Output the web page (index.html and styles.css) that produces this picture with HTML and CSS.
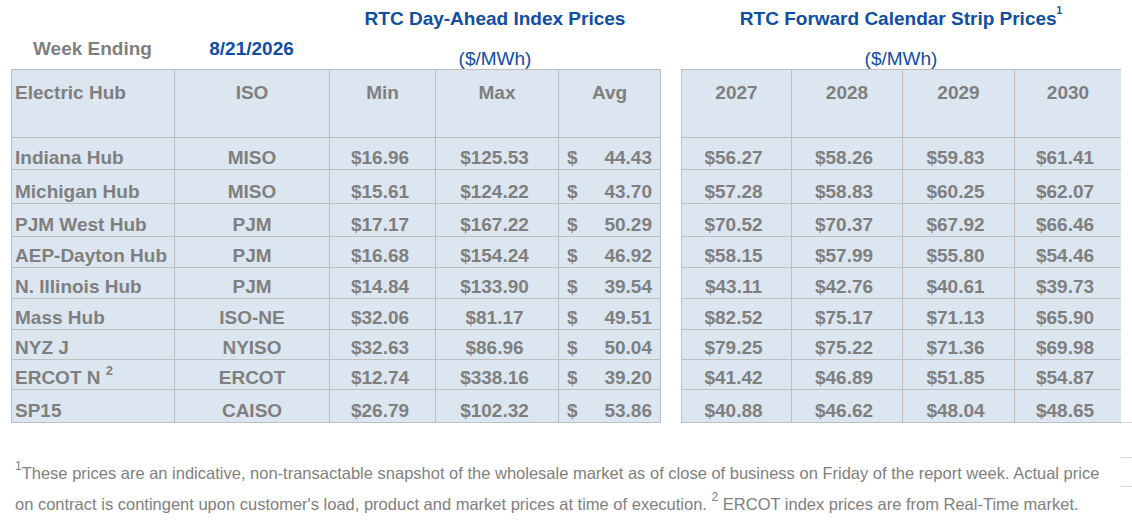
FILE: index.html
```html
<!DOCTYPE html>
<html lang="en">
<head>
<meta charset="utf-8">
<title>RTC Prices</title>
<link rel="stylesheet" href="styles.css">
</head>
<body>
<div class="page">
  <div class="main">
    <div class="tables">
      <section class="block">
        <div class="cap cap-left">
          <h2 class="title">RTC Day-Ahead Index Prices</h2>
          <div class="week">Week Ending</div>
          <div class="date">8/21/2026</div>
          <div class="unit">($/MWh)</div>
        </div>
        <div class="grid grid-left">
          <div class="row">
            <div class="c h hub">Electric Hub</div>
            <div class="c h">ISO</div>
            <div class="c h">Min</div>
            <div class="c h">Max</div>
            <div class="c h">Avg</div>
          </div>
          <div class="row">
            <div class="c hub">Indiana Hub</div><div class="c">MISO</div><div class="c money">$16.96</div><div class="c money">$125.53</div><div class="c acct"><span>$</span><span>44.43</span></div>
          </div>
          <div class="row">
            <div class="c hub">Michigan Hub</div><div class="c">MISO</div><div class="c money">$15.61</div><div class="c money">$124.22</div><div class="c acct"><span>$</span><span>43.70</span></div>
          </div>
          <div class="row">
            <div class="c hub">PJM West Hub</div><div class="c">PJM</div><div class="c money">$17.17</div><div class="c money">$167.22</div><div class="c acct"><span>$</span><span>50.29</span></div>
          </div>
          <div class="row">
            <div class="c hub">AEP-Dayton Hub</div><div class="c">PJM</div><div class="c money">$16.68</div><div class="c money">$154.24</div><div class="c acct"><span>$</span><span>46.92</span></div>
          </div>
          <div class="row">
            <div class="c hub">N. Illinois Hub</div><div class="c">PJM</div><div class="c money">$14.84</div><div class="c money">$133.90</div><div class="c acct"><span>$</span><span>39.54</span></div>
          </div>
          <div class="row">
            <div class="c hub">Mass Hub</div><div class="c">ISO-NE</div><div class="c money">$32.06</div><div class="c money">$81.17</div><div class="c acct"><span>$</span><span>49.51</span></div>
          </div>
          <div class="row">
            <div class="c hub">NYZ J</div><div class="c">NYISO</div><div class="c money">$32.63</div><div class="c money">$86.96</div><div class="c acct"><span>$</span><span>50.04</span></div>
          </div>
          <div class="row">
            <div class="c hub"><span>ERCOT N <sup class="cell-sup">2</sup></span></div><div class="c">ERCOT</div><div class="c money">$12.74</div><div class="c money">$338.16</div><div class="c acct"><span>$</span><span>39.20</span></div>
          </div>
          <div class="row">
            <div class="c hub">SP15</div><div class="c">CAISO</div><div class="c money">$26.79</div><div class="c money">$102.32</div><div class="c acct"><span>$</span><span>53.86</span></div>
          </div>
        </div>
      </section>

      <section class="block">
        <div class="cap cap-right">
          <h2 class="title">RTC Forward Calendar Strip Prices<sup class="title-sup">1</sup></h2>
          <div class="unit">($/MWh)</div>
        </div>
        <div class="grid grid-right">
          <div class="row">
            <div class="c h">2027</div><div class="c h">2028</div><div class="c h">2029</div><div class="c h">2030</div>
          </div>
          <div class="row"><div class="c fwd">$56.27</div><div class="c fwd">$58.26</div><div class="c fwd">$59.83</div><div class="c fwd">$61.41</div></div>
          <div class="row"><div class="c fwd">$57.28</div><div class="c fwd">$58.83</div><div class="c fwd">$60.25</div><div class="c fwd">$62.07</div></div>
          <div class="row"><div class="c fwd">$70.52</div><div class="c fwd">$70.37</div><div class="c fwd">$67.92</div><div class="c fwd">$66.46</div></div>
          <div class="row"><div class="c fwd">$58.15</div><div class="c fwd">$57.99</div><div class="c fwd">$55.80</div><div class="c fwd">$54.46</div></div>
          <div class="row"><div class="c fwd">$43.11</div><div class="c fwd">$42.76</div><div class="c fwd">$40.61</div><div class="c fwd">$39.73</div></div>
          <div class="row"><div class="c fwd">$82.52</div><div class="c fwd">$75.17</div><div class="c fwd">$71.13</div><div class="c fwd">$65.90</div></div>
          <div class="row"><div class="c fwd">$79.25</div><div class="c fwd">$75.22</div><div class="c fwd">$71.36</div><div class="c fwd">$69.98</div></div>
          <div class="row"><div class="c fwd">$41.42</div><div class="c fwd">$46.89</div><div class="c fwd">$51.85</div><div class="c fwd">$54.87</div></div>
          <div class="row"><div class="c fwd">$40.88</div><div class="c fwd">$46.62</div><div class="c fwd">$48.04</div><div class="c fwd">$48.65</div></div>
        </div>
      </section>
    </div>

    <p class="note"><sup class="note-sup">1</sup>These prices are an indicative, non-transactable snapshot of the wholesale market as of close of business on Friday of the report week. Actual price<br>on contract is contingent upon customer's load, product and market prices at time of execution. <sup class="note-sup">2</sup> ERCOT index prices are from Real-Time market.</p>
  </div>
  <div class="edge">
    <div class="edge-cell edge-a"></div>
    <div class="edge-cell edge-b"></div>
    <div class="edge-cell edge-c"></div>
  </div>
</div>
</body>
</html>
```

FILE: styles.css
```css
* {
  box-sizing: border-box;
}

html, body {
  margin: 0;
  padding: 0;
  background: #ffffff;
}

body {
  font-family: "Liberation Sans", Arial, sans-serif;
  color: #7f7f7f;
}

.page {
  display: flex;
  width: 1132px;
}

.main {
  width: 1121px;
  flex: 0 0 1121px;
}

.tables {
  display: flex;
  gap: 20px;
  padding-left: 11px;
}

.block {
  display: flex;
  flex-direction: column;
}

/* captions above the tables */
.cap {
  display: grid;
  grid-template-rows: 38px 31px;
  font-size: 19px;
  white-space: nowrap;
}

.cap-left {
  grid-template-columns: 163px 155px 332px;
}

.cap-right {
  grid-template-columns: 440px;
}

.title {
  margin: 0;
  padding-top: 8px;
  font-size: 19px;
  line-height: 22px;
  font-weight: bold;
  color: #0f4ea3;
  text-align: center;
  grid-row: 1;
}

.cap-left .title {
  grid-column: 3;
}

.cap-right .title {
  grid-column: 1;
}

.title-sup {
  font-size: 10px;
  line-height: 0;
  vertical-align: 11px;
  font-weight: bold;
}

.week {
  grid-row: 2;
  grid-column: 1;
  text-align: center;
  font-weight: bold;
  line-height: 22px;
  color: #7f7f7f;
}

.date {
  grid-row: 2;
  grid-column: 2;
  text-align: center;
  font-weight: bold;
  line-height: 22px;
  color: #0f4ea3;
}

.unit {
  grid-row: 2;
  align-self: end;
  text-align: center;
  line-height: 20px;
  color: #0f4ea3;
}

.cap-left .unit {
  grid-column: 3;
}

.cap-right .unit {
  grid-column: 1;
}

/* table grids: grey background + 1px gaps make the rules */
.grid {
  display: grid;
  gap: 1px;
  padding: 1px;
  background: #bfbfbf;
  grid-template-rows: 67px 31px 33px 32px 30px 30px 30px 29px 29px 32px;
}

.grid-left {
  grid-template-columns: 162px 154px 105px 122px 101px;
}

.grid-right {
  grid-template-columns: 109px 110px 111px 106px;
  padding-right: 0;
}

.row {
  display: contents;
}

.c {
  background: #dce6f1;
  display: flex;
  align-items: flex-end;
  justify-content: center;
  font-size: 19px;
  font-weight: bold;
  line-height: 22px;
  color: #7f7f7f;
  white-space: nowrap;
}

.c.h {
  align-items: flex-start;
  padding-top: 12px;
}

.c.hub {
  justify-content: flex-start;
  padding-left: 3px;
}

.c.money {
  padding-right: 5px;
}

.c.fwd {
  padding-right: 6px;
}

.c.acct {
  justify-content: space-between;
  padding: 0 8px 0 8px;
}

.cell-sup {
  font-size: 13px;
  line-height: 0;
  vertical-align: 9px;
}

/* footnote */
.note {
  margin: 35px 0 0 0;
  padding-left: 15px;
  font-size: 16.5px;
  line-height: 31px;
  color: #808080;
  white-space: nowrap;
}

.note-sup {
  font-size: 12px;
  line-height: 0;
  vertical-align: 9px;
}

/* the faint rules peeking out at the right edge */
.edge {
  flex: 0 0 11px;
  padding-top: 422px;
}

.edge-cell {
  border-top: 1px solid #d9d9d9;
}

.edge-a {
  height: 35px;
}

.edge-b {
  height: 29px;
}

.edge-c {
  height: 20px;
}
```
